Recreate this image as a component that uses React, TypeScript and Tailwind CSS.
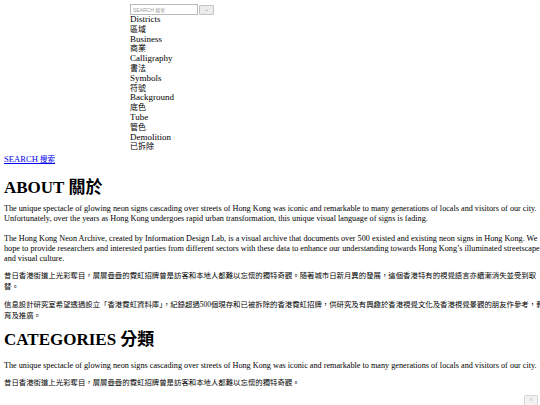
import { useState } from "react";

const categories = [
  ["Districts", "區域"],
  ["Business", "商業"],
  ["Calligraphy", "書法"],
  ["Symbols", "符號"],
  ["Background", "底色"],
  ["Tube", "管色"],
  ["Demolition", "已拆除"],
];

export default function App() {
  const [query, setQuery] = useState("");

  return (
    <div
      className="relative h-[405px] w-[540px] overflow-hidden bg-white px-1 pt-1 text-[8.2px] leading-[10px] text-black"
      style={{ fontFamily: '"Liberation Serif", "Noto Sans CJK TC", serif' }}
    >
      {/* Search + category list */}
      <div className="ml-[126px] flex flex-col">
        <form className="flex items-center" onSubmit={(e) => e.preventDefault()}>
          <input
            value={query}
            onChange={(e) => setQuery(e.target.value)}
            placeholder="SEARCH 搜索"
            className="h-[11px] w-[68px] border border-[#b8b8b8] bg-white px-[2px] text-[5px] leading-none text-black outline-none placeholder:text-[#a0a0a0]"
            style={{ fontFamily: '"Liberation Sans", "Noto Sans CJK TC", sans-serif' }}
          />
          <button
            type="submit"
            className="ml-[1px] flex h-[10px] w-[15px] items-center justify-center rounded-[1px] border border-[#c4c4c4] bg-[#ececec] text-[4px] leading-none text-[#666]"
          >
            ⌄
          </button>
        </form>
        <ul className="text-[9px]">
          {categories.map(([en, zh]) => (
            <li key={en}>
              <div className="leading-[9.8px]">{en}</div>
              <div className="text-[8px] leading-[9.8px]">{zh}</div>
            </li>
          ))}
        </ul>
      </div>

      <a href="#" className="mt-[2px] block w-fit text-[8.6px] text-[#0000ee] underline">
        SEARCH <span className="text-[7.5px]">搜索</span>
      </a>

      {/* About */}
      <h2 className="mt-[12px] text-[17px] font-bold leading-[22px]">ABOUT 關於</h2>
      <div className="w-[541px]">
        <p className="mt-[5px]">
          The unique spectacle of glowing neon signs cascading over streets of Hong Kong was iconic and remarkable to many generations of locals and visitors of our city. Unfortunately, over the years as Hong Kong undergoes rapid urban transformation, this unique visual language of signs is fading.
        </p>
        <p className="mt-[10px]">
          The Hong Kong Neon Archive, created by Information Design Lab, is a visual archive that documents over 500 existed and existing neon signs in Hong Kong. We hope to provide researchers and interested parties from different sectors with these data to enhance our understanding towards Hong Kong’s illuminated streetscape and visual culture.
        </p>
        <p className="mt-[7px] text-[7.4px] leading-[10.5px]">
          昔日香港街道上光彩奪目，層層疊疊的霓虹招牌曾是訪客和本地人都難以忘懷的獨特奇觀。隨著城市日新月異的發展，這個香港特有的視覺語言亦續漸消失並受到取替。
        </p>
        <p className="mt-[8px] text-[7.4px] leading-[10.5px]">
          信息設計研究室希望透過設立「香港霓虹資料庫」，紀錄超過500個現存和已被拆除的香港霓虹招牌，供研究及有興趣於香港視覺文化及香港視覺景觀的朋友作參考，教育及推廣。
        </p>
      </div>

      {/* Categories */}
      <h2 className="mt-[8px] text-[17px] font-bold leading-[22px]">CATEGORIES 分類</h2>
      <div className="w-[541px]">
        <p className="mt-[10px]">
          The unique spectacle of glowing neon signs cascading over streets of Hong Kong was iconic and remarkable to many generations of locals and visitors of our city.
        </p>
        <p className="mt-[7px] text-[7.4px] leading-[10.5px]">
          昔日香港街道上光彩奪目，層層疊疊的霓虹招牌曾是訪客和本地人都難以忘懷的獨特奇觀。
        </p>
      </div>

      {/* Back to top */}
      <button className="absolute bottom-0 right-[2px] flex h-[10px] w-[14px] items-start justify-center rounded-t-[2px] border border-b-0 border-[#d6d6d6] bg-[#f2f2f2] text-[6px] leading-[8px] text-[#888]">
        ˄
      </button>
    </div>
  );
}
